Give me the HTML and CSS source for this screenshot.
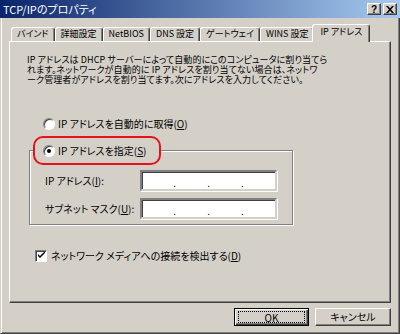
FILE: index.html
```html
<!DOCTYPE html>
<html lang="ja">
<head>
    <meta charset="UTF-8">
    <meta name="viewport" content="width=device-width, initial-scale=1.0">
    <title>TCP/IPのプロパティ</title>
    <link rel="stylesheet" href="styles.css">
</head>
<body>
    <div class="window">
        <!-- タイトルバー -->
        <div class="titlebar">
            <span class="title">TCP/IPのプロパティ</span>
            <div class="title-buttons">
                <span class="title-btn">?</span>
                <span class="title-btn">
                    <svg width="8" height="7" viewBox="0 0 8 7"><path d="M0 0h2l2 2.3L6 0h2L5 3.5 8 7H6L4 4.7 2 7H0l3-3.5z" fill="#000"/></svg>
                </span>
            </div>
        </div>

        <div class="dialog">
            <!-- タブ -->
            <div class="tabs">
                <div class="tab">バインド</div>
                <div class="tab">詳細設定</div>
                <div class="tab">NetBIOS</div>
                <div class="tab">DNS 設定</div>
                <div class="tab">ゲートウェイ</div>
                <div class="tab">WINS 設定</div>
                <div class="tab active">IP アドレス</div>
            </div>

            <div class="panel">
                <p class="desc">IP アドレスは DHCP サーバーによって自動的にこのコンピュータに割り当てら<br>れます。ネットワークが自動的に IP アドレスを割り当てない場合は、ネットワ<br>ーク管理者がアドレスを割り当てます。次にアドレスを入力してください。</p>

                <div class="option auto"><span class="radio"></span>IP アドレスを自動的に取得(<u>O</u>)</div>

                <fieldset class="group">
                    <legend class="option marked"><span class="radio checked"></span>IP アドレスを指定(<u>S</u>)</legend>
                    <div class="field">
                        <span class="field-label">IP アドレス(<u>I</u>):</span>
                        <div class="ip"><span></span>.<span></span>.<span></span>.<span></span></div>
                    </div>
                    <div class="field">
                        <span class="field-label">サブネット マスク(<u>U</u>):</span>
                        <div class="ip"><span></span>.<span></span>.<span></span>.<span></span></div>
                    </div>
                </fieldset>

                <div class="option detect">
                    <span class="checkbox">
                        <svg width="7" height="7" viewBox="0 0 7 7"><path d="M0 2l2 2 5-5v2L2 6 0 4z" fill="#000"/></svg>
                    </span>ネットワーク メディアへの接続を検出する(<u>D</u>)
                </div>
            </div>

            <!-- ボタン -->
            <div class="buttons">
                <button class="btn default"><span class="focus">OK</span></button>
                <button class="btn">キャンセル</button>
            </div>
        </div>
    </div>
</body>
</html>
```

FILE: styles.css
```css
* {
    box-sizing: border-box;
}
body {
    margin: 0;
    background-color: #d4d0c8;
    font-family: "Noto Sans CJK JP", sans-serif;
    font-size: 10px;
    font-feature-settings: "palt";
    color: #000;
}
.window {
    width: 400px;
    height: 334px;
    display: flex;
    flex-direction: column;
}
.titlebar {
    height: 18px;
    padding: 0 3px;
    display: flex;
    align-items: center;
    justify-content: space-between;
    background: linear-gradient(to right, #0a246a, #a6caf0);
    color: #fff;
}
.title {
    font-size: 11px;
    line-height: 18px;
}
.title-buttons {
    display: flex;
    gap: 2px;
}
.title-btn {
    width: 14px;
    height: 12px;
    display: flex;
    align-items: center;
    justify-content: center;
    background-color: #d4d0c8;
    border: 1px solid;
    border-color: #fff #404040 #404040 #fff;
    box-shadow: inset -1px -1px #808080;
    font: bold 10px "Liberation Sans", sans-serif;
    color: #000;
}
.dialog {
    flex: 1;
    padding: 6px 8px 0 8px;
    border-left: 1px solid #d4d0c8;
    border-right: 1px solid #404040;
    border-bottom: 1px solid #404040;
    box-shadow: inset 1px 0 #fff, inset -1px -1px #808080;
}
.tabs {
    height: 17px;
    margin-left: 2px;
    display: flex;
    align-items: flex-end;
    font-size: 9px;
}
.tab {
    height: 14px;
    padding: 0 5px;
    line-height: 12px;
    border: 1px solid;
    border-bottom: none;
    border-color: #fff #404040 #404040 #fff;
    border-radius: 3px 3px 0 0;
    box-shadow: inset -1px 0 #808080;
    white-space: nowrap;
}
.tab.active {
    position: relative;
    z-index: 1;
    height: 18px;
    margin: 0 -2px -1px;
    padding: 0 7px;
    line-height: 14px;
    background-color: #d4d0c8;
}
.panel {
    height: 262px;
    padding: 13px 17px 0;
    border: 1px solid;
    border-color: #fff #404040 #404040 #fff;
    box-shadow: inset -1px -1px #808080;
}
.desc {
    margin: 0;
    font-size: 9px;
    line-height: 10px;
    letter-spacing: 0.1px;
    white-space: nowrap;
}
.option {
    display: flex;
    align-items: center;
    height: 13px;
    line-height: 13px;
    white-space: nowrap;
}
.option.auto {
    margin: 32px 0 0 16px;
}
.radio {
    position: relative;
    width: 12px;
    height: 12px;
    margin-right: 3px;
    border-radius: 50%;
    background-color: #fff;
    border: 1px solid;
    border-color: #808080 #fff #fff #808080;
    box-shadow: inset 1px 1px #404040;
}
.radio.checked::after {
    content: "";
    position: absolute;
    left: 3px;
    top: 3px;
    width: 4px;
    height: 4px;
    border-radius: 50%;
    background-color: #000;
}
.group {
    width: 264px;
    margin: 6px 0 0 2px;
    padding: 5px 0;
    border: 1px solid #808080;
    box-shadow: 1px 1px #fff, inset 1px 1px #fff;
}
.option.marked {
    height: 29px;
    margin-left: 3px;
    padding: 0 12px 0 8px;
    border: 2px solid #e8101a;
    border-radius: 10px;
    background-color: #d4d0c8;
}
.field {
    display: flex;
    align-items: center;
    height: 21px;
    margin-left: 15px;
}
.field + .field {
    margin-top: 7px;
}
.field-label {
    width: 95px;
}
.ip {
    width: 137px;
    height: 21px;
    display: flex;
    align-items: center;
    padding-top: 3px;
    background-color: #fff;
    border: 2px solid;
    border-color: #808080 #d4d0c8 #d4d0c8 #808080;
    box-shadow: inset 1px 1px #404040, 1px 1px #fff;
}
.ip span {
    flex: 1;
}
.option.detect {
    margin: 24px 0 0 8px;
}
.checkbox {
    width: 12px;
    height: 12px;
    margin-right: 4px;
    display: flex;
    align-items: center;
    justify-content: center;
    background-color: #fff;
    border: 1px solid;
    border-color: #808080 #fff #fff #808080;
    box-shadow: inset 1px 1px #404040;
}
.buttons {
    display: flex;
    justify-content: flex-end;
    gap: 6px;
    margin-top: 5px;
}
.btn {
    width: 76px;
    height: 18px;
    padding: 0;
    font: inherit;
    font-feature-settings: "palt";
    line-height: 14px;
    background-color: #d4d0c8;
    border: 1px solid;
    border-color: #fff #404040 #404040 #fff;
    box-shadow: inset -1px -1px #808080;
    color: #000;
}
.btn.default {
    width: 75px;
    padding: 2px;
    border: 1px solid #000;
    box-shadow: inset 1px 1px #fff, inset -1px -1px #404040, inset -2px -2px #808080;
}
.focus {
    display: block;
    height: 12px;
    margin: 0 1px;
    line-height: 11px;
    border: 1px dotted #000;
}
```
